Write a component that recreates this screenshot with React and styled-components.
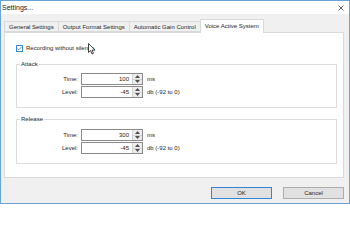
import React from "react";
import styled, { createGlobalStyle } from "styled-components";

const Global = createGlobalStyle`
  html, body { margin: 0; padding: 0; width: 350px; height: 204px; overflow: hidden; background: #fff; }
  * { box-sizing: border-box; }
`;

const Window = styled.div`
  width: 350px;
  height: 204px;
  border: 1px solid #6aa3d9;
  display: flex;
  flex-direction: column;
  font-family: "Liberation Sans", "Noto Sans", sans-serif;
  font-size: 6px;
  color: #1e1e1e;
  background: #f0f0f0;
`;

const TitleBar = styled.div`
  height: 13px;
  background: #fff;
  display: flex;
  align-items: center;
  justify-content: space-between;
  padding: 0 5px 0 1px;
  font-size: 7px;
  color: #222;
`;

const Body = styled.div`
  flex: 1;
  display: flex;
  flex-direction: column;
  padding: 5px 5px 4px 3px;
`;

const Tabs = styled.div`
  display: flex;
  align-items: flex-end;
  height: 13px;
  position: relative;
  z-index: 1;
`;

const Tab = styled.div`
  height: ${(p) => (p.$active ? "14px" : "11px")};
  padding: 0 ${(p) => p.$pad}px;
  display: flex;
  align-items: center;
  background: ${(p) => (p.$active ? "#fff" : "#f0f0f0")};
  border: 1px solid #d9d9d9;
  border-bottom: ${(p) => (p.$active ? "none" : "1px solid #d9d9d9")};
  margin-left: ${(p) => (p.$first ? "0" : "-1px")};
  margin-bottom: ${(p) => (p.$active ? "-1px" : "0")};
  white-space: nowrap;
  padding-bottom: ${(p) => (p.$active ? "2px" : "0")};
`;

const Panel = styled.div`
  height: 146px;
  background: #fff;
  border: 1px solid #d9d9d9;
  padding: 11px 6px 0 11px;
  display: flex;
  flex-direction: column;
`;

const CheckRow = styled.label`
  display: flex;
  align-items: center;
  gap: 3px;
  height: 8px;
  position: relative;
  margin-bottom: 9px;
`;

const CheckBox = styled.span`
  width: 7px;
  height: 7px;
  border: 1px solid #3a86d0;
  background: #fff;
  display: flex;
  align-items: center;
  justify-content: center;
`;

const Cursor = styled.svg`
  position: absolute;
  left: 72px;
  top: -1px;
`;

const Group = styled.fieldset`
  margin: 0 0 ${(p) => p.$mb}px 0;
  border: 1px solid #dcdcdc;
  padding: ${(p) => p.$pt}px 0 9px 0;
  min-width: 0;
`;

const Legend = styled.legend`
  padding: 0 1px;
  margin-left: 3px;
  line-height: 6px;
`;

const Grid = styled.div`
  display: grid;
  grid-template-columns: 61px 62px auto;
  column-gap: 3px;
  row-gap: 1px;
  align-items: center;
`;

const FieldLabel = styled.span`
  text-align: right;
`;

const Spin = styled.div`
  height: 12px;
  border: 1px solid #8a8a8a;
  display: flex;
  background: #fff;
`;

const SpinValue = styled.div`
  flex: 1;
  text-align: right;
  padding-right: 3px;
  line-height: 10px;
`;

const SpinButtons = styled.div`
  width: 10px;
  display: flex;
  flex-direction: column;
  border-left: 1px solid #d0d0d0;
`;

const SpinBtn = styled.div`
  flex: 1;
  background: #ececec;
  display: flex;
  align-items: center;
  justify-content: center;
  border-bottom: ${(p) => (p.$top ? "1px solid #d6d6d6" : "none")};
`;

const Unit = styled.span`
  padding-left: 1px;
`;

const Footer = styled.div`
  flex: 1;
  display: flex;
  justify-content: flex-end;
  align-items: flex-end;
  gap: 11px;
`;

const Button = styled.div`
  width: 61px;
  height: 12px;
  background: #e1e1e1;
  border: 1px solid ${(p) => (p.$default ? "#2f86d6" : "#adadad")};
  display: flex;
  align-items: center;
  justify-content: center;
`;

const Up = () => (
  <svg width="5" height="3" viewBox="0 0 5 3"><path d="M0 3 L2.5 0 L5 3 Z" fill="#505050" /></svg>
);
const Down = () => (
  <svg width="5" height="3" viewBox="0 0 5 3"><path d="M0 0 L2.5 3 L5 0 Z" fill="#505050" /></svg>
);

const SpinField = ({ value }) => (
  <Spin>
    <SpinValue>{value}</SpinValue>
    <SpinButtons>
      <SpinBtn $top><Up /></SpinBtn>
      <SpinBtn><Down /></SpinBtn>
    </SpinButtons>
  </Spin>
);

const Section = ({ title, time, level, pt, mb }) => (
  <Group $pt={pt} $mb={mb}>
    <Legend>{title}</Legend>
    <Grid>
      <FieldLabel>Time:</FieldLabel>
      <SpinField value={time} />
      <Unit>ms</Unit>
      <FieldLabel>Level:</FieldLabel>
      <SpinField value={level} />
      <Unit>db (-92 to 0)</Unit>
    </Grid>
  </Group>
);

export default function App() {
  return (
    <>
      <Global />
      <Window>
        <TitleBar>
          <span>Settings...</span>
          <svg width="6" height="6" viewBox="0 0 6 6">
            <path d="M0.5 0.5 L5.5 5.5 M5.5 0.5 L0.5 5.5" stroke="#333" strokeWidth="0.8" />
          </svg>
        </TitleBar>
        <Body>
          <Tabs>
            <Tab $first $pad={4}>General Settings</Tab>
            <Tab $pad={4}>Output Format Settings</Tab>
            <Tab $pad={4}>Automatic Gain Control</Tab>
            <Tab $active $pad={4}>Voice Active System</Tab>
          </Tabs>
          <Panel>
            <CheckRow>
              <CheckBox>
                <svg width="6" height="5" viewBox="0 0 6 5">
                  <path d="M0.6 2.6 L2.2 4.1 L5.4 0.7" stroke="#2a6fb8" strokeWidth="0.9" fill="none" />
                </svg>
              </CheckBox>
              <span>Recording without silence</span>
              <Cursor width="8" height="12" viewBox="0 0 8 12">
                <path d="M0.5 0.5 L0.5 9.5 L2.6 7.6 L4 10.9 L5.4 10.3 L4.1 7.1 L7 7.1 Z" fill="#fff" stroke="#111" strokeWidth="0.8" strokeLinejoin="round" />
              </Cursor>
            </CheckRow>
            <Section title="Attack" time="100" level="-45" pt={6} mb={8} />
            <Section title="Release" time="300" level="-45" pt={7} mb={0} />
          </Panel>
          <Footer>
            <Button $default>OK</Button>
            <Button>Cancel</Button>
          </Footer>
        </Body>
      </Window>
    </>
  );
}
